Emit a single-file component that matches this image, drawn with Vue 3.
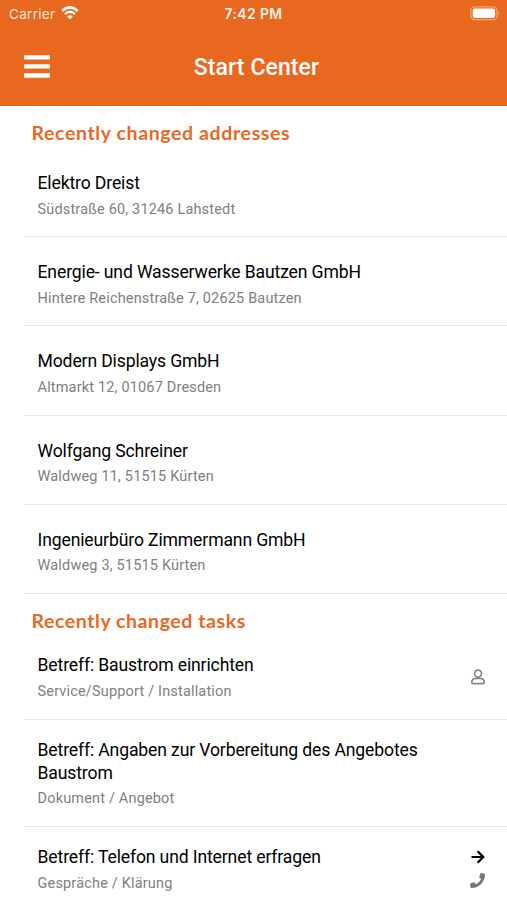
<script setup>
const addresses = [
  { title: 'Elektro Dreist', sub: 'Südstraße 60, 31246 Lahstedt' },
  { title: 'Energie- und Wasserwerke Bautzen GmbH', sub: 'Hintere Reichenstraße 7, 02625 Bautzen' },
  { title: 'Modern Displays GmbH', sub: 'Altmarkt 12, 01067 Dresden' },
  { title: 'Wolfgang Schreiner', sub: 'Waldweg 11, 51515 Kürten' },
  { title: 'Ingenieurbüro Zimmermann GmbH', sub: 'Waldweg 3, 51515 Kürten' },
]
const tasks = [
  { title: 'Betreff: Baustrom einrichten', sub: 'Service/Support / Installation', icon: 'person' },
  { title: 'Betreff: Angaben zur Vorbereitung des Angebotes Baustrom', sub: 'Dokument / Angebot' },
  { title: 'Betreff: Telefon und Internet erfragen', sub: 'Gespräche / Klärung', icon: 'call' },
]
</script>

<template>
  <div class="screen">
    <header class="header">
      <div class="status">
        <div class="carrier">
          <span>Carrier</span>
          <svg class="wifi" viewBox="0 0 18 14" width="18" height="14">
            <path d="M1.2 5 Q9 -2.2 16.8 5" fill="none" stroke="#fff" stroke-width="2.5" />
            <path d="M4 8.1 Q9 3.5 14 8.1" fill="none" stroke="#fff" stroke-width="2.3" />
            <path d="M6.2 10.4 Q9 7.9 11.8 10.4 L9 13.2Z" fill="#fff" />
          </svg>
        </div>
        <div class="time">7:42 PM</div>
        <div class="power">
          <svg viewBox="0 0 31 15" width="31" height="15">
            <rect x="0.8" y="0.8" width="26.2" height="12.9" rx="4" fill="none" stroke="#f3a373" stroke-width="1.3" />
            <rect x="2.7" y="2.6" width="22.4" height="9.3" rx="2.2" fill="#fff" />
            <path d="M28.3 5.2 Q30.5 7.2 28.3 9.3Z" fill="#f3a373" />
          </svg>
        </div>
      </div>
      <div class="nav">
        <svg class="menu" viewBox="0 0 26 24" width="26" height="24" fill="#fff">
          <rect y="0.2" width="26" height="4.4" rx="1" />
          <rect y="9.2" width="26" height="4.4" rx="1" />
          <rect y="18.3" width="26" height="4.4" rx="1" />
        </svg>
        <h1>Start Center</h1>
      </div>
    </header>

    <section class="addresses">
      <h2><span>Recently changed addresses</span></h2>
      <article v-for="a in addresses" :key="a.title" class="row">
        <div class="text">
          <div class="title"><span>{{ a.title }}</span></div>
          <div class="sub"><span>{{ a.sub }}</span></div>
        </div>
      </article>
    </section>

    <section class="tasks">
      <h2><span>Recently changed tasks</span></h2>
      <article v-for="t in tasks" :key="t.title" class="row">
        <div class="text">
          <div class="title"><span>{{ t.title }}</span></div>
          <div class="sub"><span>{{ t.sub }}</span></div>
        </div>
        <div v-if="t.icon" class="icons" :class="t.icon">
          <svg v-if="t.icon === 'person'" viewBox="0 0 14 16" width="14" height="16" fill="none" stroke="#858585" stroke-width="1.6">
            <circle cx="7" cy="4.6" r="3.5" />
            <path d="M3.8 9.5 H10.2 Q13.2 10.2 13.2 13.2 Q13.2 14.6 12 14.6 H2 Q0.8 14.6 0.8 13.2 Q0.8 10.2 3.8 9.5Z" />
          </svg>
          <template v-else>
            <svg viewBox="0 0 14 14" width="14" height="14" fill="none" stroke="#000" stroke-width="2.2">
              <path d="M0.5 7 H12 M6.6 1.2 L12.3 7 L6.6 12.8" />
            </svg>
            <svg class="phone" viewBox="0 0 512 512" width="15" height="15" fill="#757575">
              <path d="M493.400 24.600l-104-24c-11.300-2.600-22.900 3.300-27.500 13.900l-48 112c-4.200 9.800-1.400 21.300 6.900 28l60.600 49.600c-36 76.700-98.900 140.500-177.200 177.200l-49.600-60.600c-6.800-8.300-18.200-11.100-28-6.900l-112 48C3.900 366.500-2 378.100.600 389.400l24 104C27.100 504.200 36.700 512 48 512c256.100 0 464-207.500 464-464 0-11.200-7.700-20.900-18.600-23.400z" />
            </svg>
          </template>
        </div>
      </article>
    </section>
  </div>
</template>

<style>
body { margin: 0; background: #fff; }
</style>

<style scoped>
.screen {
  width: 100%;
  height: 900px;
  overflow: hidden;
  background: #fff;
  font-family: Roboto, "Liberation Sans", sans-serif;
}
.header { height: 105.5px; background: #e9681f; color: #fff; }
.status {
  display: grid;
  grid-template-columns: 1fr auto 1fr;
  align-items: center;
  height: 27px;
  padding: 0 6px 0 9px;
  font-family: Inter, sans-serif;
}
.carrier { display: flex; align-items: center; gap: 6px; font-size: 13.5px; letter-spacing: 0.3px; color: #ffe9dc; }
.wifi { margin-bottom: 1px; }
.time { padding-right: 3px; font-size: 13.9px; font-weight: 600; letter-spacing: 0.4px; color: #fff3ea; }
.power { display: flex; justify-content: flex-end; }
.nav {
  display: grid;
  grid-template-columns: 1fr auto 1fr;
  align-items: center;
  height: 79px;
  padding: 0 24px;
}
h1 { margin: 0; padding: 2px 0 0 6px; font-size: 23px; font-weight: 500; line-height: 28px; letter-spacing: 0.1px; }
h2 {
  margin: 0;
  height: 42.5px;
  padding: 13.5px 31.5px 0;
  box-sizing: border-box;
  font-family: Lato, sans-serif;
  font-size: 19.5px;
  font-weight: 700;
  line-height: 27px;
  letter-spacing: 0.62px;
  color: #e9681f;
}
.tasks h2 { height: 41px; padding-top: 13px; letter-spacing: 0.57px; }
.row {
  display: flex;
  justify-content: space-between;
  margin-left: 24px;
  padding: 24px 0 16.7px 13.5px;
  border-bottom: 1px solid #e9e9e9;
}
.tasks .row { padding-top: 19.5px; }
.text { max-width: 400px; }
.title { font-size: 17.6px; line-height: 22.5px; letter-spacing: -0.14px; color: #000; }
.sub { margin-top: 5px; font-size: 14.5px; line-height: 20px; letter-spacing: 0.17px; color: #808080; }
.icons { display: flex; flex-direction: column; align-items: center; padding-right: 22px; }
.icons.person { padding-top: 15px; }
.icons.call { padding-top: 3.5px; gap: 9px; }
</style>
